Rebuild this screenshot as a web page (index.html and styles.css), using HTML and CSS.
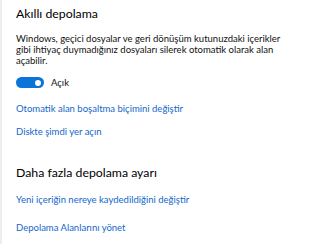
FILE: index.html
```html
<!DOCTYPE html>
<html lang="tr">
<head>
<meta charset="utf-8">
<link rel="stylesheet" href="styles.css">
</head>
<body>
<div class="page">
  <section class="group">
    <h2 class="title">Akıllı depolama</h2>
    <p class="desc">Windows, geçici dosyalar ve geri dönüşüm kutunuzdaki içerikler gibi ihtiyaç duymadığınız dosyaları silerek otomatik olarak alan açabilir.</p>
    <div class="toggle-row">
      <span class="toggle"><span class="knob"></span></span>
      <span class="toggle-label">Açık</span>
    </div>
    <a class="link first" href="#">Otomatik alan boşaltma biçimini değiştir</a>
    <a class="link" href="#">Diskte şimdi yer açın</a>
  </section>
  <section class="group second">
    <h2 class="title">Daha fazla depolama ayarı</h2>
    <a class="link first" href="#">Yeni içeriğin nereye kaydedildiğini değiştir</a>
    <a class="link last" href="#">Depolama Alanlarını yönet</a>
  </section>
</div>
</body>
</html>
```
FILE: styles.css
```css
html, body {
  margin: 0;
  padding: 0;
  background: #ffffff;
}
body {
  font-family: Lato, "Noto Sans", sans-serif;
  color: #000;
  width: 320px;
  height: 244px;
  overflow: hidden;
}
.page {
  border-left: 2px solid #ededed;
  padding: 5px 0 0 14px;
  height: 244px;
  box-sizing: border-box;
}
.title {
  margin: 0;
  font-size: 12.3px;
  font-weight: 400;
  line-height: 18px;
  color: #000;
}
.desc {
  margin: 10px 0 0;
  font-size: 9.5px;
  line-height: 11px;
  width: 270px;
  color: #111;
}
.toggle-row {
  display: flex;
  align-items: center;
  gap: 7px;
  margin-top: 11px;
  height: 11px;
}
.toggle {
  width: 28px;
  height: 11px;
  border-radius: 6px;
  background: #0a74d8;
  position: relative;
  display: block;
}
.knob {
  position: absolute;
  right: 3px;
  top: 2.5px;
  width: 6px;
  height: 6px;
  border-radius: 50%;
  background: #fff;
}
.toggle-label {
  font-size: 9.5px;
  line-height: 11px;
  color: #111;
}
.link {
  display: block;
  width: max-content;
  color: #1368cc;
  text-decoration: none;
  font-size: 9.5px;
  line-height: 14px;
  margin-top: 9px;
}
.link.first {
  margin-top: 14px;
}
.second {
  margin-top: 25px;
}
.second .link.first {
  margin-top: 11px;
}
.second .link.last {
  margin-top: 14px;
}
```
